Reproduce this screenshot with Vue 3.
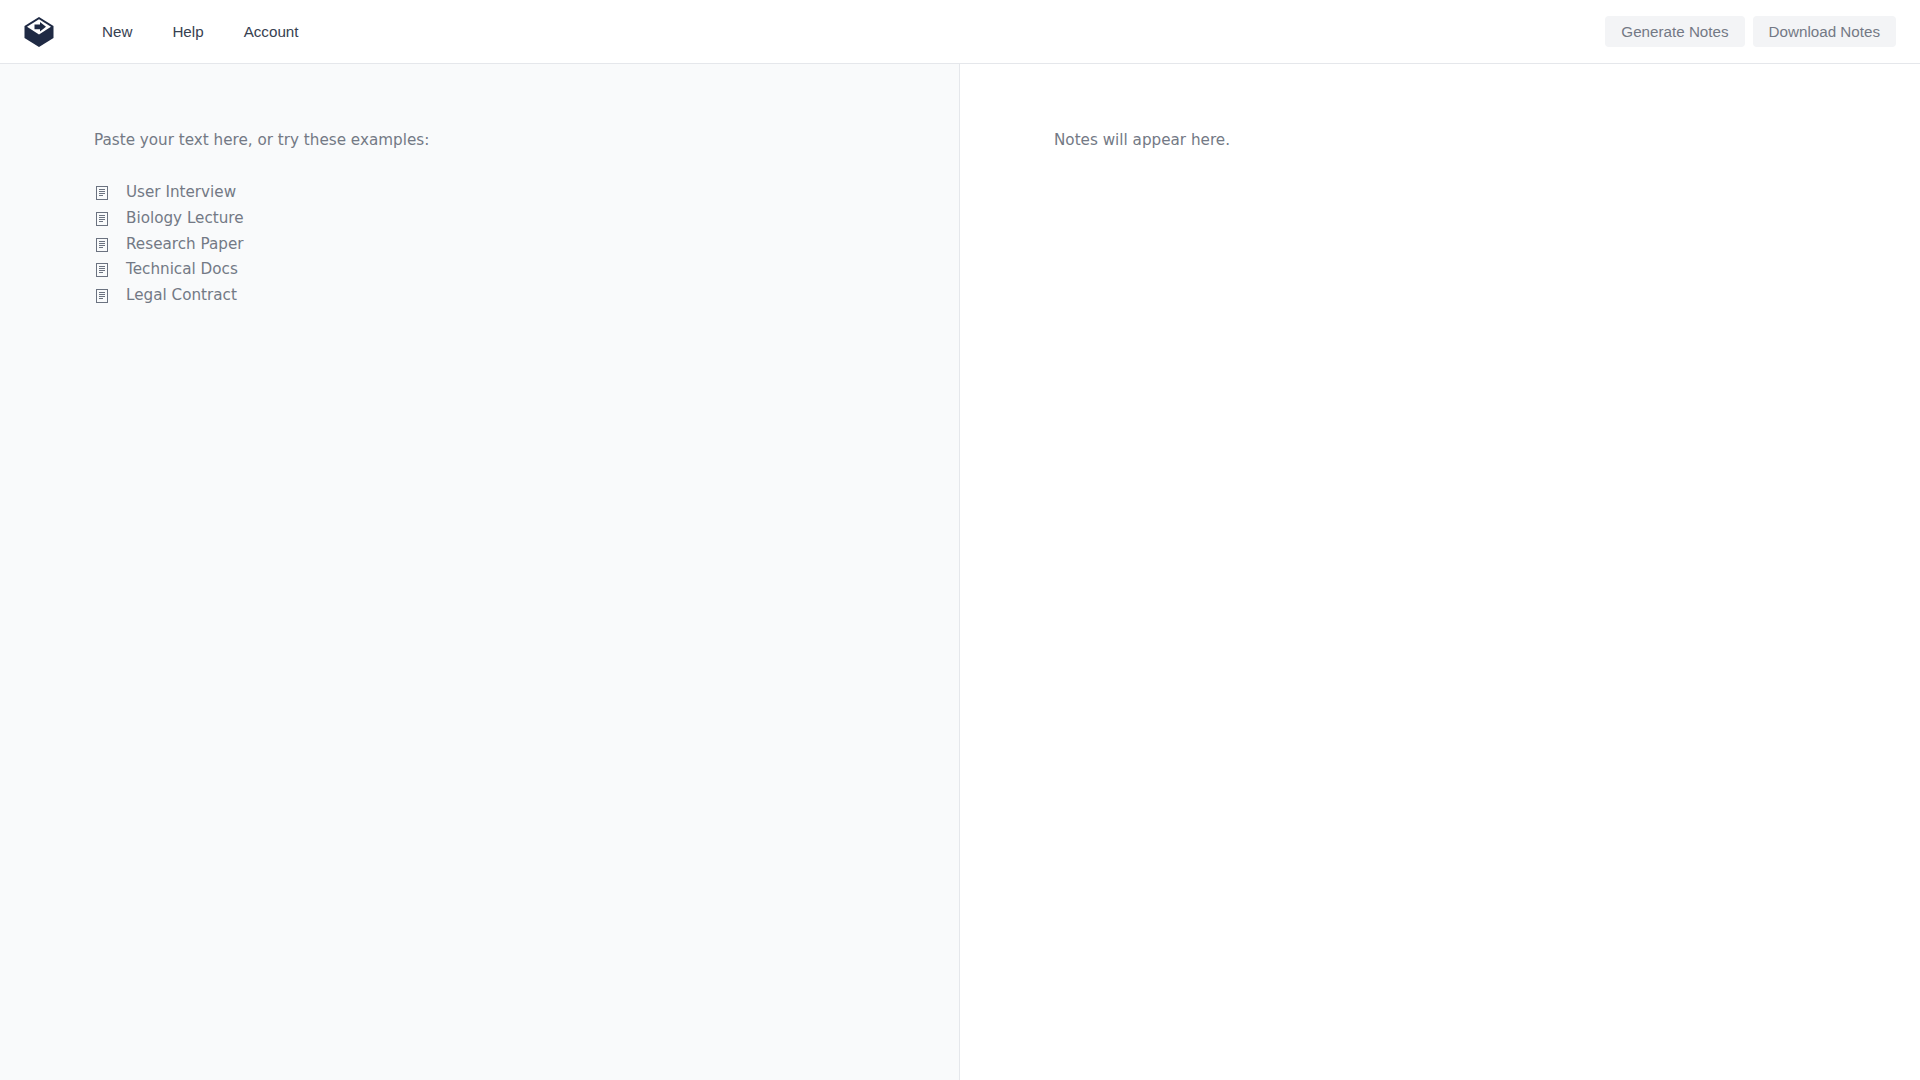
<script setup>
const examples = ['User Interview', 'Biology Lecture', 'Research Paper', 'Technical Docs', 'Legal Contract']
const navItems = ['New', 'Help', 'Account']
</script>

<template>
  <div class="app">
    <header class="topbar">
      <div class="brand">
        <svg class="logo" width="30" height="30" viewBox="0 0 30 30">
          <path d="M15 0 L29.5 9 V21 L15 30 L0.5 21 V9 Z" fill="#1f2a44" />
          <path d="M15 2.2 L27 9.8 L15 17.6 L3 9.8 Z" fill="#fff" />
          <path d="M10.5 7.4 H16 V5 L22 9.8 L16 14.6 V12.2 H10.5 Z" fill="#1f2a44" />
        </svg>
        <nav class="nav">
          <a v-for="item in navItems" :key="item" class="nav-item">{{ item }}</a>
        </nav>
      </div>
      <div class="actions">
        <button class="btn">Generate Notes</button>
        <button class="btn">Download Notes</button>
      </div>
    </header>
    <main class="panes">
      <section class="pane pane-left">
        <p class="hint">Paste your text here, or try these examples:</p>
        <ul class="examples">
          <li v-for="ex in examples" :key="ex" class="example">
            <svg class="doc" width="16" height="16" viewBox="0 0 16 16">
              <rect x="2.5" y="1.5" width="11" height="13" fill="none" stroke="#6b7280" stroke-width="1" />
              <path d="M5 4.5 H11 M5 6.5 H11 M5 8.5 H11 M5 10.5 H9" stroke="#6b7280" stroke-width="1" fill="none" />
            </svg>
            <span>{{ ex }}</span>
          </li>
        </ul>
      </section>
      <section class="pane pane-right">
        <p class="hint">Notes will appear here.</p>
      </section>
    </main>
  </div>
</template>

<style>
html, body { margin: 0; background: #fff; }
</style>

<style scoped>
.app {
  height: 1080px;
  display: flex;
  flex-direction: column;
  overflow: hidden;
}
.topbar {
  height: 64px;
  box-sizing: border-box;
  border-bottom: 1px solid #e5e7eb;
  display: flex;
  align-items: center;
  justify-content: space-between;
  padding: 0 24px;
  background: #fff;
  font-family: "Liberation Sans", Arial, sans-serif;
  font-size: 15.2px;
}
.brand { display: flex; align-items: center; }
.logo { display: block; }
.nav { display: flex; gap: 40px; margin-left: 48px; }
.nav-item { color: #374151; }
.actions { display: flex; gap: 8px; }
.btn {
  height: 31px;
  padding: 0 16px;
  border: 0;
  border-radius: 4px;
  background: #f3f4f6;
  color: #737985;
  font: inherit;
}
.panes { flex: 1; display: flex; min-height: 0; }
.pane {
  width: 50%;
  box-sizing: border-box;
  padding: 64px 94px;
  font-family: "DejaVu Sans", sans-serif;
  font-size: 15.2px;
  color: #737985;
}
.pane-left { background: #f9fafb; border-right: 1px solid #e5e7eb; }
.pane-right { background: #fff; }
.hint { margin: 0; line-height: 24px; }
.examples { list-style: none; margin: 27px 0 0; padding: 0; }
.example { display: flex; align-items: center; gap: 16px; height: 25.84px; }
.doc { display: block; flex: none; position: relative; top: 1px; }
</style>
